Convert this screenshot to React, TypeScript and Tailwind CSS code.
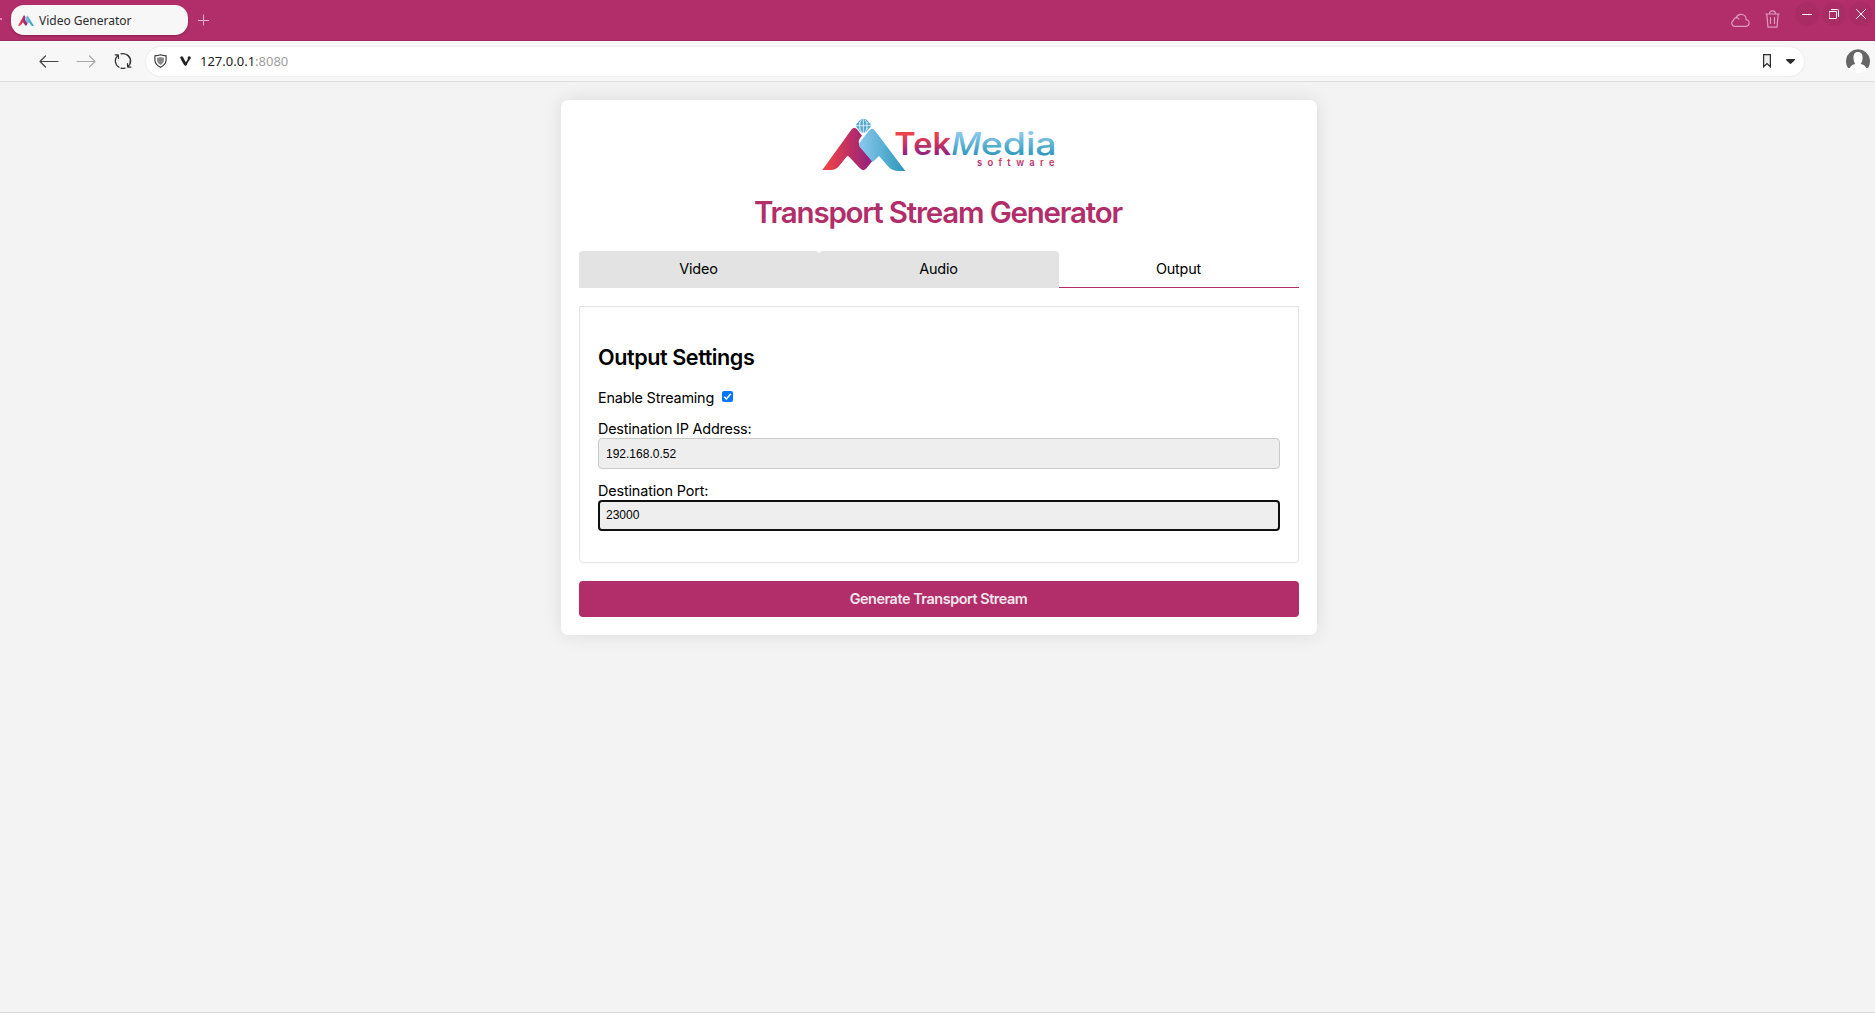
import React, { useState } from "react";

function BrandMark() {
  return (
    <>
      <path
        fill="url(#redMark)"
        d="M37 180 L125 58 Q133 48 141 58 L156 77 Q140 92 150 108 L187 153 L170 174 Q160 187 149 174 L117 140 Q113 136 109 141 L88 167 Q77 180 62 180 Z"
      />
      <path
        fill="url(#blueMark)"
        d="M150 96 L178 61 Q186 52 194 61 L286 183 H262 Q245 182 234 169 L207 138 L188 156 L150 112 Q144 104 150 96 Z"
      />
    </>
  );
}

function Gradients() {
  return (
    <defs>
      <linearGradient id="redMark" gradientUnits="userSpaceOnUse" x1="40" y1="0" x2="188" y2="0">
        <stop offset="0.1" stopColor="#ea4049" />
        <stop offset="1" stopColor="#8f1f80" />
      </linearGradient>
      <linearGradient id="blueMark" gradientUnits="userSpaceOnUse" x1="148" y1="0" x2="284" y2="0">
        <stop offset="0" stopColor="#8cc8ee" />
        <stop offset="1" stopColor="#2c98bb" />
      </linearGradient>
      <linearGradient id="redText" gradientUnits="userSpaceOnUse" x1="0" y1="66" x2="0" y2="136">
        <stop offset="0.1" stopColor="#ee434a" />
        <stop offset="1" stopColor="#8e2082" />
      </linearGradient>
      <linearGradient id="blueText" gradientUnits="userSpaceOnUse" x1="0" y1="66" x2="0" y2="136">
        <stop offset="0" stopColor="#8fccef" />
        <stop offset="1" stopColor="#2f98bb" />
      </linearGradient>
      <linearGradient id="softText" gradientUnits="userSpaceOnUse" x1="0" y1="145" x2="0" y2="170">
        <stop offset="0" stopColor="#e04055" />
        <stop offset="1" stopColor="#9b2578" />
      </linearGradient>
    </defs>
  );
}

function Logo() {
  return (
    <svg width="260" height="70" viewBox="0 0 780 210" fontFamily="Inter, sans-serif">
      <Gradients />
      <BrandMark />
      <path fill="#53a9cd" d="M151 29 Q160 23 170 29 L181 41 Q185 47 181 52 L169 65 Q160 71 151 65 L140 52 Q136 47 140 41 Z" />
      <path
        fill="none"
        stroke="#fff"
        strokeWidth="2.2"
        d="M138 47H183M160 26V69M155 28Q142 47 155 67M165 28Q178 47 165 67M146 36L151 41M175 36L170 41M146 58L151 54M175 58L170 54"
      />
      <text x="253" y="135" fontSize="92" fontWeight="600" fill="url(#redText)" textLength="170" lengthAdjust="spacingAndGlyphs">
        Tek
      </text>
      <text x="424" y="135" fontSize="92" fontWeight="500" fontStyle="italic" fill="url(#blueText)" textLength="90" lengthAdjust="spacingAndGlyphs">
        M
      </text>
      <text x="512" y="135" fontSize="92" fontWeight="500" fill="url(#blueText)" textLength="228" lengthAdjust="spacingAndGlyphs">
        edia
      </text>
      <text x="501" y="168" fontSize="28" fontWeight="600" fill="url(#softText)" letterSpacing="16.2">
        software
      </text>
    </svg>
  );
}

const line = { fill: "none", stroke: "currentColor", strokeLinecap: "round", strokeLinejoin: "round" } as const;

function TabStrip() {
  return (
    <div className="flex h-[41px] bg-[#b22e6a] shadow-[inset_0_-1px_0_#a12a60]">
      <div className="mt-[18px] h-[2px] w-[2px] bg-[#d58bae]" />
      <div className="mt-[5px] ml-[9px] flex h-[30px] w-[177px] items-center rounded-[13px] bg-[#f7f7f7] pl-[7px] shadow-[0_1px_2px_rgba(0,0,0,0.25)]">
        <svg width="16" height="11" viewBox="37 50 250 134" preserveAspectRatio="none">
          <BrandMark />
        </svg>
        <span className="mt-px ml-[5px] font-['Noto_Sans'] text-[12px] leading-none whitespace-nowrap text-[#2b2b2b]">
          Video Generator
        </span>
      </div>
      <svg className="mt-[14px] ml-[9px] text-[#e3b3ca]" width="12" height="12" {...line} strokeLinecap="butt">
        <path d="M6.5 .5V11.5M1 6.5H12" />
      </svg>
      <div className="flex-1" />
      <svg className="mt-[12px] text-[#dc9dbc]" width="20" height="16" {...line}>
        <path strokeWidth="1.2" d="M5 14.3H15.5A3.3 3.3 0 0 0 16.2 7.7 A5.2 5.2 0 0 0 6.2 5.6 A3 3 0 0 0 3.6 8.2 A3.2 3.2 0 0 0 5 14.3ZM6.2 5.6Q8 5.7 9 7" />
      </svg>
      <svg className="mt-[10px] ml-[15px] text-[#dc9dbc]" width="15" height="18" {...line}>
        <path strokeWidth="1.2" d="M.8 4H14.2M4.5 4Q4.5 .8 7.5 .8T10.5 4M1.8 4L3 17.2H12L13.2 4M5.5 7.5V13.5M9.5 7.5V13.5" />
      </svg>
      <div className="mt-[2px] ml-[15px] flex gap-[3px] pr-[2px] text-white">
        <span className="grid h-[24px] w-[24px] place-items-center rounded-full bg-[#aa2c65]">
          <svg width="10" height="10" {...line} strokeLinecap="butt">
            <path d="M0 5.5H10" />
          </svg>
        </span>
        <span className="grid h-[24px] w-[24px] place-items-center rounded-full bg-[#aa2c65]">
          <svg width="10" height="10" {...line}>
            <path d="M.5 2.5H7.5V9.5H.5ZM2.5 .5H8.5Q9.5 .5 9.5 1.5V7.5" />
          </svg>
        </span>
        <span className="grid h-[24px] w-[24px] place-items-center rounded-full bg-[#aa2c65]">
          <svg width="10" height="10" {...line}>
            <path d="M.5 .5L9.5 9.5M9.5 .5L.5 9.5" />
          </svg>
        </span>
      </div>
    </div>
  );
}

function AddressBar() {
  return (
    <div className="flex h-[41px] items-center border-b border-[#dcdcdc] bg-[#f7f7f7]">
      <svg className="ml-[39px] text-[#444]" width="20" height="13" {...line} strokeWidth="1.2">
        <path d="M1 6.5H19M6.5 1L1 6.5L6.5 12" />
      </svg>
      <svg className="ml-[17px] text-[#a8a8a8]" width="20" height="13" {...line} strokeWidth="1.2">
        <path d="M1 6.5H19M13.5 1L19 6.5L13.5 12" />
      </svg>
      <svg className="ml-[18px] text-[#333]" width="18" height="18" {...line} strokeWidth="1.3">
        <path d="M5 15.2A7.3 7.3 0 0 1 3.6 3.6M1.2 2.8L4.3 3L4.5 6.3M7 1.9A7.3 7.3 0 0 1 15.8 11.5M13 2.8A7.3 7.3 0 0 1 14.4 14.4M16.8 15.2L13.7 15L13.5 11.7M11 16.1A7.3 7.3 0 0 1 7 16.1" />
      </svg>
      <div className="ml-[14px] flex h-[29px] w-[1658px] items-center rounded-full bg-white pr-[9px] pl-[8px] shadow-[0_0_2px_rgba(0,0,0,0.12)]">
        <svg width="13" height="14" viewBox="0 0 14 15" preserveAspectRatio="none">
          <path d="M1 2Q4 2 7 .8Q10 2 13 2V7Q12.6 11.5 7 14.2Q1.4 11.5 1 7Z" fill="none" stroke="#333" strokeWidth="1.2" />
          <path d="M3.3 4Q5.5 4 7 3.2Q8.5 4 10.7 4V7Q10.4 10 7 11.8Q3.6 10 3.3 7Z" fill="#888" />
        </svg>
        <svg className="ml-[13px]" width="11" height="10" viewBox="0 0 11 10">
          <path d="M1.7 1.7Q3.2 5 5.4 8.2" fill="none" stroke="#222" strokeWidth="2.9" strokeLinecap="round" />
          <circle cx="9.2" cy="1.8" r="1.6" fill="#222" />
          <path d="M9.4 2L5.8 8.4" stroke="#222" strokeWidth="1.8" strokeLinecap="round" />
        </svg>
        <span className="ml-[9px] font-['Noto_Sans'] text-[13px] leading-none text-[#222]">
          127.0.0.1<span className="text-[#a0a0a0]">:8080</span>
        </span>
        <div className="flex-1" />
        <svg width="8" height="14" viewBox="0 0 8 14">
          <path d="M.6 .6H7.4V12.8L4 9.5L.6 12.8Z" fill="#eee" stroke="#2b2b2b" strokeWidth="1.2" />
        </svg>
        <svg className="ml-[15px]" width="9" height="5">
          <path d="M0 0H9Q9 1 8 2L5.3 4.6Q4.5 5.2 3.7 4.6L1 2Q0 1 0 0Z" fill="#2b2b2b" />
        </svg>
      </div>
      <svg className="mb-px ml-[41px] shrink-0" width="26" height="25" viewBox="0 0 26 25">
        <path d="M3 20A12 12 0 1 1 23 20Z" fill="#666" />
        <path d="M4 22Q5 17 10.2 16Q8.4 13.5 8.4 9.2Q8.6 4 13 4T17.6 9.2Q17.6 13.5 15.8 16Q21 17 22 22Q18 25 13 25T4 22Z" fill="#fff" />
      </svg>
    </div>
  );
}

const tabs = ["Video", "Audio", "Output"];

export default function App() {
  const [active, setActive] = useState("Output");
  return (
    <div className="flex h-[1013px] w-[1875px] flex-col overflow-hidden border-b border-[#dcdcdc] bg-[#f3f3f3] font-['Inter',sans-serif] text-black">
      <TabStrip />
      <AddressBar />
      <main className="mt-[18px] ml-[561px] flex h-[535px] w-[756px] flex-col rounded-[7px] bg-white px-[18px] shadow-[0_0_18px_rgba(0,0,0,0.1)]">
        <div className="flex h-[87px] justify-center pt-[10px] pl-[2px]">
          <Logo />
        </div>
        <h1 className="flex h-[51px] items-center justify-center pr-[2px] text-[29.5px] leading-none font-semibold tracking-[-0.041em] whitespace-nowrap text-[#b22e6a]">
          Transport Stream Generator
        </h1>
        <div className="mt-[13px] flex h-[37px]">
          {tabs.map((t) => (
            <button
              key={t}
              onClick={() => setActive(t)}
              className={
                "flex-1 rounded-t-[4px] border-b pt-px pr-px text-[14.4px] leading-none tracking-[-0.012em] " +
                (t === active ? "rounded-none border-[#b22e6a] bg-white" : "border-[#e3e3e3] bg-[#e3e3e3]")
              }
            >
              {t}
            </button>
          ))}
        </div>
        <section className="mt-[18px] h-[257px] rounded-b-[4px] border border-[#e3e3e3] px-[18px] pt-[38px]">
          <h2 className="h-[24px] text-[21.6px] leading-[24px] font-semibold tracking-[-0.02em]">Output Settings</h2>
          <div className="mt-[19px] flex h-[20px] items-center tracking-[-0.012em]">
            <label className="text-[14.4px] leading-[20px]">Enable Streaming</label>
            <span className="mb-[3px] ml-[8px] grid h-[11px] w-[11px] place-items-center rounded-[2px] bg-[#0075ff]">
              <svg width="9" height="9" {...line} strokeWidth="1.6" className="text-white" strokeLinecap="butt">
                <path d="M1.2 4.8L3.4 7L7.8 1.8" />
              </svg>
            </span>
          </div>
          <label className="mt-[11px] block h-[19px] text-[14.4px] leading-[20px] tracking-[-0.014em]">Destination IP Address:</label>
          <div className="flex h-[31px] items-center rounded-[4px] border border-[#cacaca] bg-[#eeeeee] px-[7px] font-['Liberation_Sans'] text-[12px]">
            192.168.0.52
          </div>
          <label className="mt-[12px] block h-[19px] text-[14.4px] leading-[20px] tracking-[-0.01em]">Destination Port:</label>
          <div className="flex h-[31px] items-center rounded-[4px] border-2 border-[#101010] bg-[#eeeeee] px-[6px] pb-px font-['Liberation_Sans'] text-[12px]">
            23000
          </div>
        </section>
        <button className="mt-[18px] h-[36px] rounded-[4px] bg-[#b22e6a] pr-px text-[14.4px] leading-none font-semibold tracking-[-0.031em] text-[#f3e6ed]">
          Generate Transport Stream
        </button>
      </main>
    </div>
  );
}
